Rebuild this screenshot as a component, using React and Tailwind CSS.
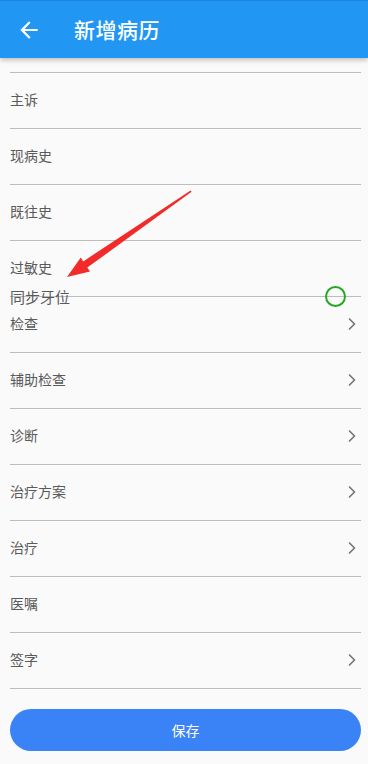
import React from "react";
import { MdArrowBack } from "react-icons/md";
import { ChevronRight } from "lucide-react";

const rows = [
  { label: "主诉" },
  { label: "现病史" },
  { label: "既往史" },
  { label: "过敏史", sync: true },
  { label: "检查", arrow: true },
  { label: "辅助检查", arrow: true },
  { label: "诊断", arrow: true },
  { label: "治疗方案", arrow: true },
  { label: "治疗", arrow: true },
  { label: "医嘱" },
  { label: "签字", arrow: true },
];

function Row({ item }) {
  return (
    <div className="relative flex items-center justify-between h-[56px] pb-[2px] border-b border-[#bdbdbd]">
      <span className="text-[14px] text-[#5a5a5a]">{item.label}</span>
      {item.arrow && <ChevronRight size={20} strokeWidth={2} className="text-[#757575] -mr-[1px]" />}
      {item.sync && (
        <div className="absolute left-0 right-0 -bottom-[15px] h-[28px] flex items-center justify-between">
          <span className="text-[15px] text-[#5a5a5a]">同步牙位</span>
          <span className="relative -top-[1px] w-[21px] h-[21px] mr-[15px] rounded-full border-[2.5px] border-[#22a822]"></span>
        </div>
      )}
    </div>
  );
}

export default function App() {
  return (
    <div className="relative w-[368px] h-[764px] bg-[#fafafa] overflow-hidden font-['Noto_Sans_CJK_SC','Noto_Sans',sans-serif]">
      <div className="relative z-10 h-[58px] bg-[#2196f3] border-t border-[#1c86de] flex items-center shadow-[0_2px_5px_rgba(0,0,0,0.25)]">
        <MdArrowBack size={26} className="ml-[16px] text-white" />
        <h1 className="ml-[32px] text-[21px] font-medium text-white tracking-[0.5px]">新增病历</h1>
      </div>

      <div className="ml-[10px] w-[351px] mt-[14px] border-t border-[#bdbdbd]">
        {rows.map((item) => (
          <Row key={item.label} item={item} />
        ))}
      </div>

      <button className="ml-[10px] mt-[20px] w-[351px] h-[42px] rounded-full bg-[#3a83f7] text-white text-[14px]">
        保存
      </button>

      <svg
        className="absolute left-0 top-0 pointer-events-none"
        width="368"
        height="764"
        viewBox="0 0 368 764"
      >
        <polygon
          points="67,277 90,271.5 87.3,267.6 191.6,191.8 190.6,190.4 83.2,261.4 80.8,257.4"
          fill="#f22a2a"
        />
      </svg>
    </div>
  );
}
